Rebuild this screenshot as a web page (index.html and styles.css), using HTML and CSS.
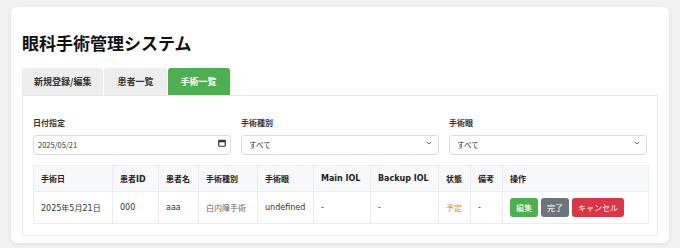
FILE: index.html
```html
<!DOCTYPE html>
<html lang="ja">

<head>
    <meta charset="UTF-8">
    <meta name="viewport" content="width=device-width, initial-scale=1.0">
    <title>眼科手術管理システム</title>
    <link rel="stylesheet" href="styles.css">
</head>

<body>
    <div class="container">
        <h1>眼科手術管理システム</h1>

        <div class="tabs">
            <button class="tab">新規登録/編集</button>
            <button class="tab">患者一覧</button>
            <button class="tab active">手術一覧</button>
        </div>

        <div class="panel">
            <div class="filters">
                <div class="form-group">
                    <label for="dateFilter">日付指定</label>
                    <div class="field">
                        <input type="text" id="dateFilter" value="2025/05/21">
                        <svg class="field-icon" width="8" height="8" viewBox="0 0 8 8">
                            <rect x="0.75" y="1.25" width="6.5" height="6" rx="0.8" fill="none" stroke="#333" stroke-width="1.2"/>
                            <rect x="0.75" y="1.25" width="6.5" height="2" fill="#333"/>
                        </svg>
                    </div>
                </div>
                <div class="form-group">
                    <label for="typeFilter">手術種別</label>
                    <div class="field">
                        <select id="typeFilter">
                            <option>すべて</option>
                            <option>白内障手術</option>
                        </select>
                        <svg class="field-icon" width="6" height="4" viewBox="0 0 6 4">
                            <path d="M0.8 0.8 L3 3 L5.2 0.8" fill="none" stroke="#666" stroke-width="1"/>
                        </svg>
                    </div>
                </div>
                <div class="form-group">
                    <label for="eyeFilter">手術眼</label>
                    <div class="field">
                        <select id="eyeFilter">
                            <option>すべて</option>
                            <option>右眼</option>
                            <option>左眼</option>
                        </select>
                        <svg class="field-icon" width="6" height="4" viewBox="0 0 6 4">
                            <path d="M0.8 0.8 L3 3 L5.2 0.8" fill="none" stroke="#666" stroke-width="1"/>
                        </svg>
                    </div>
                </div>
            </div>

            <table class="surgery-table">
                <colgroup>
                    <col class="c-date">
                    <col class="c-id">
                    <col class="c-name">
                    <col class="c-type">
                    <col class="c-eye">
                    <col class="c-main">
                    <col class="c-backup">
                    <col class="c-status">
                    <col class="c-note">
                    <col class="c-ops">
                </colgroup>
                <thead>
                    <tr>
                        <th>手術日</th>
                        <th>患者ID</th>
                        <th>患者名</th>
                        <th>手術種別</th>
                        <th>手術眼</th>
                        <th>Main IOL</th>
                        <th>Backup IOL</th>
                        <th>状態</th>
                        <th>備考</th>
                        <th>操作</th>
                    </tr>
                </thead>
                <tbody>
                    <tr>
                        <td>2025年5月21日</td>
                        <td>000</td>
                        <td>aaa</td>
                        <td class="muted">白内障手術</td>
                        <td>undefined</td>
                        <td>-</td>
                        <td>-</td>
                        <td class="status-planned">予定</td>
                        <td>-</td>
                        <td>
                            <div class="actions">
                                <button class="btn btn-edit">編集</button>
                                <button class="btn btn-done">完了</button>
                                <button class="btn btn-cancel">キャンセル</button>
                            </div>
                        </td>
                    </tr>
                </tbody>
            </table>
        </div>
    </div>
</body>

</html>
```

FILE: styles.css
```css
* {
    margin: 0;
    padding: 0;
    box-sizing: border-box;
}

body {
    background: #f2f2f2;
    color: #222;
    font-family: 'DejaVu Sans', 'Noto Sans CJK JP', sans-serif;
    padding: 7px 11px;
}

.container {
    background: #fff;
    border-radius: 6px;
    box-shadow: 0 1px 5px rgba(0, 0, 0, 0.08);
    padding: 22px 11px 7px;
}

h1 {
    font-family: 'Noto Sans CJK JP', sans-serif;
    font-size: 17px;
    font-weight: 700;
    line-height: 27px;
    color: #111;
    margin-bottom: 12px;
}

.tabs {
    display: flex;
    gap: 1px;
    border-bottom: 1px solid #e8e8e8;
}

.tab {
    font-family: 'Noto Sans CJK JP', sans-serif;
    font-size: 9px;
    font-weight: 700;
    color: #333;
    background: #eeeeee;
    border: none;
    border-radius: 3px 3px 0 0;
    height: 27px;
    padding: 0 13px;
}

.tab:first-child {
    padding: 0 12px;
}

.tab.active {
    background: #4caf50;
    color: #fff;
}

.panel {
    border: 1px solid #ececec;
    border-top: none;
    padding: 21px 10px 11px;
}

.filters {
    display: grid;
    grid-template-columns: repeat(3, 1fr);
    gap: 10px;
    margin-bottom: 12px;
}

.form-group label {
    display: block;
    font-family: 'Noto Sans CJK JP', sans-serif;
    font-size: 8px;
    font-weight: 700;
    color: #333;
    line-height: 12px;
    margin-bottom: 4px;
}

.field {
    position: relative;
    height: 20px;
}

.field input,
.field select {
    appearance: none;
    width: 100%;
    height: 20px;
    border: 1px solid #dcdcdc;
    border-radius: 3px;
    background: #fff;
    font-family: 'Noto Sans CJK JP', sans-serif;
    font-size: 7.5px;
    color: #333;
    padding: 0 16px 0 4px;
    outline: none;
}

.field select {
    padding-left: 7px;
}

.field-icon {
    position: absolute;
    right: 7px;
    top: 50%;
    transform: translateY(-50%);
    pointer-events: none;
}

.field input + .field-icon {
    right: 5px;
}

.surgery-table {
    width: 100%;
    border-collapse: collapse;
    table-layout: fixed;
    font-size: 8px;
}

.c-date { width: 79px; }
.c-id { width: 46px; }
.c-name { width: 40px; }
.c-type { width: 59px; }
.c-eye { width: 56px; }
.c-main { width: 57px; }
.c-backup { width: 68px; }
.c-status { width: 32px; }
.c-note { width: 32px; }
.c-ops { width: 146px; }

.surgery-table th,
.surgery-table td {
    border: 1px solid #ebedf0;
    text-align: left;
    padding: 0 7px;
    white-space: nowrap;
    overflow: hidden;
}

.surgery-table th {
    background: #f6f8fa;
    font-weight: 700;
    height: 26px;
    color: #222;
}

.surgery-table td {
    height: 32px;
    color: #333;
}

.surgery-table td.muted {
    color: #666;
}

.surgery-table td.status-planned {
    color: #e08b1c;
}

.actions {
    display: flex;
    gap: 3px;
}

.btn {
    font-family: 'Noto Sans CJK JP', sans-serif;
    font-size: 8px;
    color: #fff;
    border: none;
    border-radius: 3px;
    height: 19px;
    padding: 0 6px;
}

.btn-edit {
    background: #4caf50;
}

.btn-done {
    background: #6c757d;
}

.btn-cancel {
    background: #dc3545;
}
```
